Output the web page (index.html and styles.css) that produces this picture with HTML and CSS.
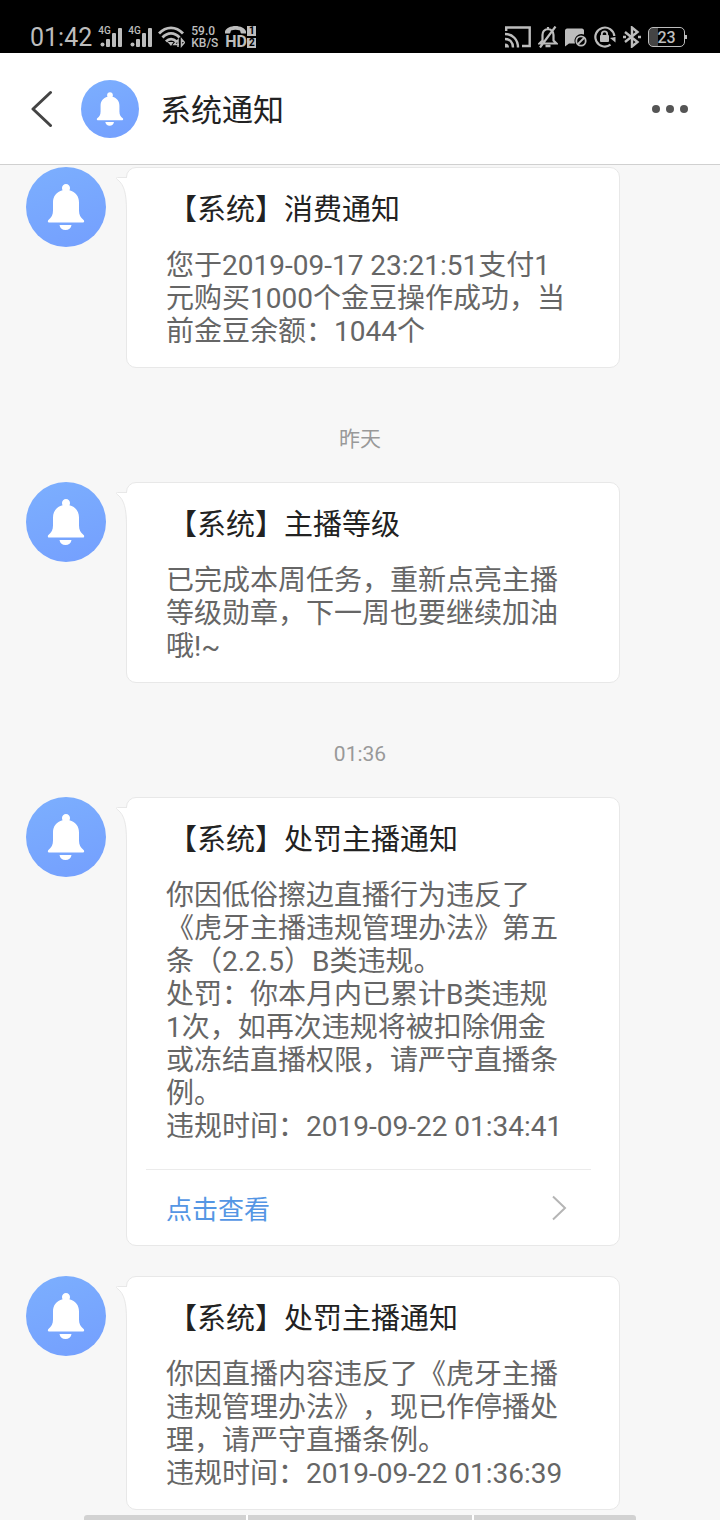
FILE: index.html
```html
<!DOCTYPE html>
<html lang="zh-CN">

<head>
    <meta charset="UTF-8">
    <meta name="viewport" content="width=device-width, initial-scale=1.0">
    <title>系统通知</title>
    <link rel="stylesheet" href="styles.css">
</head>

<body>
    <!-- Shared shapes -->
    <svg class="sprite" aria-hidden="true">
        <defs>
            <symbol id="bell" viewBox="0 0 80 80">
                <path d="M40 17c2.300 0 4 1.800 4 4 0 .9-.2 1.500-.6 2.200 6.200 1.500 9.600 6.200 9.600 12.300v8c0 4.500 1.500 6.800 4.600 9.400.9.800.8 2.600-.6 2.600H23c-1.400 0-1.500-1.800-.6-2.600 3.100-2.600 4.600-4.900 4.600-9.400v-8c0-6.100 3.400-10.800 9.600-12.300-.4-.7-.6-1.300-.6-2.200 0-2.200 1.700-4 4-4z" />
                <path d="M33.500 58h12c-.5 3.200-2.800 5-6 5s-5.500-1.800-6-5z" />
            </symbol>
            <symbol id="signal" viewBox="0 0 24 22">
                <circle cx="4.500" cy="18.500" r="2" />
                <rect x="8" y="13" width="4" height="8" rx="1" />
                <rect x="14" y="7" width="4" height="14" rx="1" />
                <rect x="20" y="2" width="4" height="19" rx="1" />
            </symbol>
        </defs>
    </svg>

    <div class="status-bar">
        <div class="status-left">
            <span class="clock">01:42</span>
            <span class="signal"><svg><use href="#signal" /></svg><small>4G</small></span>
            <span class="signal"><svg><use href="#signal" /></svg><small>4G</small></span>
            <svg width="27" height="22" viewBox="0 0 27 22" fill="none" stroke="currentColor" stroke-width="2.800">
                <path d="M1 7.500C8 0 18 0 25 7.500M4.500 11.500c5-5.500 12-5.500 17 0M8 15.500c3-3.300 7-3.300 10.500 0" />
                <path d="M9.500 16h6L13 20z" fill="currentColor" stroke="none" />
                <path d="M20 21v-7l-4 4.500h5M23.500 13v7l3-3.500z" stroke-width="1.500" />
            </svg>
            <span class="speed">59.0<br>KB/S</span>
            <span class="hd">
                <svg width="21" height="8" viewBox="0 0 21 8"><path d="M0 7.500C-1 3 5 0 10.500 0S22 3 21 7.500h-4.500c-1 0-1-2-1.500-3-3-1-6-1-9 0C5.500 5.500 5.500 7.500 4.500 7.500z" /></svg>
                <b>HD</b>
                <span class="sims"><i>1</i><i>2</i></span>
            </span>
        </div>
        <div class="status-right">
            <svg width="26" height="22" viewBox="0 0 26 22" fill="none" stroke="currentColor" stroke-width="2.400">
                <path d="M1.200 5V1.500h23.500v18.500H17M0 8c7.500 0 13 5.500 13 13.500M0 13c4.800 0 8 3.200 8 8.500" />
                <path d="M0 17.500c2.500 0 4 1.500 4 4H0z" fill="currentColor" stroke="none" />
            </svg>
            <svg width="20" height="22" viewBox="0 0 20 22" fill="none" stroke="currentColor" stroke-width="2.200">
                <path d="M1.500 17.500 4.500 14.500V9c0-3.500 2-5.500 5.500-6 3.500.5 5.500 2.500 5.500 6v5.500l3 3zM10 3V1M2 21.500 17.500.5" />
                <path d="M7.500 20h5" stroke-width="2.500" />
            </svg>
            <svg width="22" height="22" viewBox="0 0 22 22">
                <path d="M2 2.500h15c1 0 2 1 2 2v4a7 7 0 0 0-9 9H4l-4 3v-16c0-1 1-2 2-2z" fill="currentColor" />
                <circle cx="16" cy="15" r="4.700" fill="none" stroke="currentColor" stroke-width="1.800" />
                <path d="m13 18 6-6" stroke="currentColor" stroke-width="1.800" />
            </svg>
            <svg width="22" height="22" viewBox="0 0 22 22" fill="none" stroke="currentColor" stroke-width="2.200">
                <path d="M16.500 18.700A9.500 9.500 0 1 1 20.300 10" />
                <path d="m16 12 5.500-1v5.500z" fill="currentColor" stroke="none" />
                <rect x="6" y="9" width="9" height="7" rx="1" fill="currentColor" stroke="none" />
                <path d="M7.800 10V8c0-3.500 5.400-3.500 5.400 0v2" stroke-width="1.800" />
            </svg>
            <svg width="18" height="22" viewBox="0 0 18 22" fill="none" stroke="currentColor" stroke-width="2.400">
                <path d="m2 6 12.500 10-5.500 4.500v-19l5.500 4.500L2 16" />
                <path d="M0 11h3M15 11h3" />
            </svg>
            <span class="battery">23</span>
        </div>
    </div>

    <header class="chat-header">
        <button class="back" type="button" aria-label="返回">
            <svg width="22" height="38" viewBox="0 0 22 38"><path d="M19.500 2.500 2 19l17.500 16.500" /></svg>
        </button>
        <span class="avatar avatar-small"><svg><use href="#bell" /></svg></span>
        <h1>系统通知</h1>
        <button class="more" type="button" aria-label="更多">
            <span></span><span></span><span></span>
        </button>
    </header>

    <main class="messages">
        <article class="message">
            <span class="avatar"><svg><use href="#bell" /></svg></span>
            <div class="bubble">
                <svg class="tail" width="12" height="34" viewBox="0 0 12 34"><path d="M12 .5H1.500C-.5 .5 .5 2 2 3c6 5 8.500 13 8.500 31H12z" /><path class="line" d="M11 .5H1.500C-.5 .5 .5 2 2 3c6 5 8.500 13 8.500 31" /></svg>
                <h2>【系统】消费通知</h2>
                <p>您于2019-09-17 23:21:51支付1<br>元购买1000个金豆操作成功，当<br>前金豆余额：1044个</p>
            </div>
        </article>

        <time class="divider">昨天</time>

        <article class="message">
            <span class="avatar"><svg><use href="#bell" /></svg></span>
            <div class="bubble">
                <svg class="tail" width="12" height="34" viewBox="0 0 12 34"><path d="M12 .5H1.500C-.5 .5 .5 2 2 3c6 5 8.500 13 8.500 31H12z" /><path class="line" d="M11 .5H1.500C-.5 .5 .5 2 2 3c6 5 8.500 13 8.500 31" /></svg>
                <h2>【系统】主播等级</h2>
                <p>已完成本周任务，重新点亮主播<br>等级勋章，下一周也要继续加油<br>哦!~</p>
            </div>
        </article>

        <time class="divider">01:36</time>

        <article class="message">
            <span class="avatar"><svg><use href="#bell" /></svg></span>
            <div class="bubble">
                <svg class="tail" width="12" height="34" viewBox="0 0 12 34"><path d="M12 .5H1.500C-.5 .5 .5 2 2 3c6 5 8.500 13 8.500 31H12z" /><path class="line" d="M11 .5H1.500C-.5 .5 .5 2 2 3c6 5 8.500 13 8.500 31" /></svg>
                <h2>【系统】处罚主播通知</h2>
                <p>你因低俗擦边直播行为违反了<br>《虎牙主播违规管理办法》第五<br>条（2.2.5）B类违规。<br>处罚：你本月内已累计B类违规<br>1次，如再次违规将被扣除佣金<br>或冻结直播权限，请严守直播条<br>例。<br>违规时间：2019-09-22 01:34:41</p>
                <a class="detail-link" href="#">
                    点击查看
                    <svg width="16" height="26" viewBox="0 0 16 26"><path d="m2 1.500 12 11.500L2 24.500" /></svg>
                </a>
            </div>
        </article>

        <article class="message">
            <span class="avatar"><svg><use href="#bell" /></svg></span>
            <div class="bubble">
                <svg class="tail" width="12" height="34" viewBox="0 0 12 34"><path d="M12 .5H1.500C-.5 .5 .5 2 2 3c6 5 8.500 13 8.500 31H12z" /><path class="line" d="M11 .5H1.500C-.5 .5 .5 2 2 3c6 5 8.500 13 8.500 31" /></svg>
                <h2>【系统】处罚主播通知</h2>
                <p>你因直播内容违反了《虎牙主播<br>违规管理办法》，现已作停播处<br>理，请严守直播条例。<br>违规时间：2019-09-22 01:36:39</p>
            </div>
        </article>
    </main>

    <!-- Gesture bar -->
    <div class="gesture-bar"><span></span><span></span><span></span></div>
</body>

</html>
```

FILE: styles.css
```css
* {
    box-sizing: border-box;
}

body {
    margin: 0;
    background: #f7f7f7;
    color: #222;
    font-family: Roboto, "Noto Sans CJK SC", sans-serif;
    text-spacing-trim: space-all;
}

h1,
h2,
p {
    margin: 0;
    font-weight: 400;
}

button {
    padding: 0;
    border: 0;
    background: none;
}

svg {
    display: block;
    flex: none;
}

.sprite {
    position: absolute;
    width: 0;
    height: 0;
}

/* Status bar */
.status-bar {
    display: flex;
    justify-content: space-between;
    height: 53px;
    padding: 20px 35px 0 30px;
    background: #000;
    color: #bdbdbd;
    fill: currentColor;
}

.status-left,
.status-right {
    display: flex;
    align-items: center;
    gap: 6px;
}

.status-right {
    gap: 7px;
}

.clock {
    padding-top: 2px;
    font-size: 25px;
    line-height: 33px;
}

.signal {
    position: relative;
}

.signal svg {
    width: 24px;
    height: 22px;
}

.signal small {
    position: absolute;
    top: 0;
    left: 0;
    font-size: 10px;
    font-weight: 500;
    line-height: 10px;
}

.speed {
    width: 28px;
    font-size: 12px;
    font-weight: 500;
    line-height: 12px;
}

.hd {
    display: grid;
    grid-template-columns: 21px 9px;
    grid-template-rows: 8px 14px;
    column-gap: 1px;
}

.hd b {
    grid-row: 2;
    font-size: 16px;
    line-height: 16px;
}

.sims {
    grid-column: 2;
    grid-row: 1 / 3;
    display: grid;
    gap: 2px;
}

.sims i {
    background: #bdbdbd;
    color: #000;
    font-size: 10px;
    font-style: normal;
    font-weight: 700;
    line-height: 10px;
    text-align: center;
}

.battery {
    position: relative;
    width: 37px;
    height: 20px;
    border: 1px solid #bdbdbd;
    border-radius: 5px;
    background: linear-gradient(to right, #444 9px, transparent 9px);
    font-size: 16px;
    font-weight: 500;
    line-height: 19px;
    text-align: center;
}

.battery::after {
    content: "";
    position: absolute;
    top: 7px;
    right: -3px;
    width: 2px;
    height: 4px;
    background: #bdbdbd;
}

/* Header */
.chat-header {
    display: flex;
    align-items: center;
    height: 112px;
    padding: 0 32px 0 31px;
    border-bottom: 1px solid #d0d0d0;
    background: #fff;
}

.back {
    margin-right: 28px;
}

.back path {
    fill: none;
    stroke: #444;
    stroke-width: 3;
    stroke-linecap: round;
    stroke-linejoin: round;
}

.chat-header h1 {
    margin-left: 21px;
    padding-top: 4px;
    font-size: 31px;
    line-height: 42px;
}

.more {
    display: flex;
    gap: 6px;
    margin-left: auto;
}

.more span {
    width: 8px;
    height: 8px;
    border-radius: 50%;
    background: #555;
}

.avatar {
    flex: none;
    width: 80px;
    height: 80px;
    border-radius: 50%;
    background: linear-gradient(160deg, #7caffe, #749ffe);
    fill: #fff;
}

.avatar svg {
    width: 100%;
    height: 100%;
}

.avatar-small {
    width: 58px;
    height: 58px;
}

/* Messages */
.messages {
    padding: 2px 100px 10px 26px;
}

.message {
    display: flex;
    align-items: flex-start;
    gap: 20px;
}

.message + .message {
    margin-top: 30px;
}

.bubble {
    position: relative;
    flex: 1;
    padding: 21px 28px 19px 39px;
    border: 1px solid #e8e8e8;
    border-radius: 10px;
    background: #fff;
}

.tail {
    position: absolute;
    top: 9px;
    left: -11px;
    fill: #fff;
}

.tail .line {
    fill: none;
    stroke: #e8e8e8;
}

.bubble h2 {
    margin: 0 0 18px 2px;
    font-size: 29px;
    line-height: 42px;
}

.bubble p {
    color: #666;
    font-size: 28px;
    line-height: 33px;
    white-space: nowrap;
}

.divider {
    display: block;
    margin: 56px -74px 28px 0;
    color: #999;
    font-size: 21px;
    line-height: 30px;
    text-align: center;
}

.detail-link {
    display: flex;
    align-items: center;
    justify-content: space-between;
    height: 76px;
    margin: 26px 0 -19px -20px;
    padding: 0 24px 0 20px;
    border-top: 1px solid #ebebeb;
    color: #5496e4;
    font-size: 26px;
    text-decoration: none;
}

.detail-link path {
    fill: none;
    stroke: #b5b5b5;
    stroke-width: 2;
}

/* Gesture bar */
.gesture-bar {
    position: fixed;
    right: 84px;
    bottom: 0;
    left: 84px;
    display: grid;
    grid-template-columns: 162fr 224fr 162fr;
    gap: 2px;
    height: 5px;
    border-radius: 3px 3px 0 0;
    background: #fff;
    overflow: hidden;
}

.gesture-bar span {
    background: #d2d2d2;
}
```
